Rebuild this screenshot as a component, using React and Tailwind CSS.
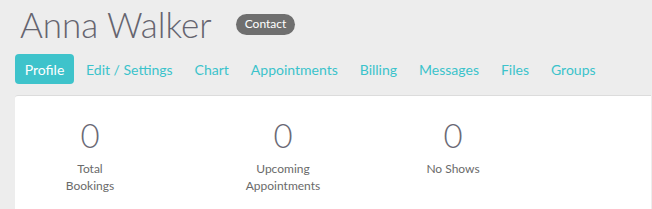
import React from "react";

const tabs = ["Edit / Settings", "Chart", "Appointments", "Billing", "Messages", "Files", "Groups"];

function Stat({ value, label, className }) {
  return (
    <div className={"flex flex-col items-center " + className}>
      <div className="text-[33px] font-light leading-none text-[#6a6975]">{value}</div>
      <div className="mt-[8px] text-center text-[12px] leading-[17px] text-[#6a6a6a]">{label}</div>
    </div>
  );
}

export default function App() {
  return (
    <div className="w-[652px] h-[209px] overflow-hidden bg-[#ededed] font-['Lato',sans-serif]">
      <div className="flex items-center pl-[20px] pt-[2px] h-[46px]">
        <h1 className="text-[35px] font-light leading-none text-[#65646f]">Anna Walker</h1>
        <span className="ml-[24px] rounded-full bg-[#6f6f6f] px-[9px] h-[21px] flex items-center text-[12px] text-white">Contact</span>
      </div>
      <div className="mt-[8px] flex items-center pl-[15px] h-[30px]">
        <div className="h-[30px] w-[59px] rounded-[4px] bg-[#3ec3cb] text-white text-[14px] flex items-center justify-center">Profile</div>
        <div className="flex items-center gap-[22px] ml-[12px] text-[14px] text-[#3bc3cb]">
          {tabs.map((t) => (
            <span key={t}>{t}</span>
          ))}
        </div>
      </div>
      <div className="mt-[11px] ml-[15px] mr-[1px] h-[120px] bg-white border-t border-[#dcdcdc] rounded-tl-[3px] flex pt-[23px]">
        <Stat value="0" label={<>Total<br />Bookings</>} className="w-[120px] ml-[15px]" />
        <Stat value="0" label={<>Upcoming<br />Appointments</>} className="w-[120px] ml-[73px]" />
        <Stat value="0" label="No Shows" className="w-[120px] ml-[50px]" />
      </div>
    </div>
  );
}
